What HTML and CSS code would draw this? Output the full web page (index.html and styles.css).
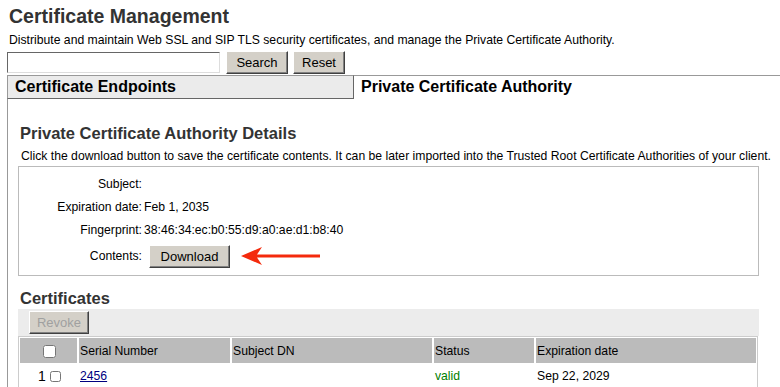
FILE: index.html
```html
<!DOCTYPE html>
<html lang="en">
<head>
  <meta charset="UTF-8" />
  <title>Certificate Management</title>
  <link rel="stylesheet" href="styles.css">
</head>
<body>
  <h1>Certificate Management</h1>
  <p class="intro">Distribute and maintain Web SSL and SIP TLS security certificates, and manage the Private Certificate Authority.</p>

  <div class="search-row">
    <input type="text" class="search-box" />
    <button class="btn btn-search">Search</button>
    <button class="btn btn-reset">Reset</button>
  </div>

  <div class="tabs">
    <div class="tab">Certificate Endpoints</div>
    <div class="tab active">Private Certificate Authority</div>
  </div>

  <div class="panel">
    <h2>Private Certificate Authority Details</h2>
    <p class="desc">Click the download button to save the certificate contents. It can be later imported into the Trusted Root Certificate Authorities of your client.</p>
    <div class="details">
      <table class="details-table">
        <tr><td class="lbl">Subject:</td><td></td></tr>
        <tr><td class="lbl">Expiration date:</td><td>Feb 1, 2035</td></tr>
        <tr><td class="lbl">Fingerprint:</td><td>38:46:34:ec:b0:55:d9:a0:ae:d1:b8:40</td></tr>
        <tr class="row-download">
          <td class="lbl">Contents:</td>
          <td>
            <div class="download-cell">
              <button class="btn download">Download</button>
              <svg class="arrow" width="80" height="20" viewBox="0 0 80 20">
                <path d="M0 10 L21 1 L16 8.5 L79 8.5 L79 11.5 L16 11.5 L21 19 Z" fill="#f42a0c"/>
              </svg>
            </div>
          </td>
        </tr>
      </table>
    </div>

    <h2 class="certs-title">Certificates</h2>
    <div class="toolbar"><button class="btn" disabled>Revoke</button></div>
    <table class="certs">
      <tr>
        <th class="c-chk"><input type="checkbox" /></th>
        <th class="c-serial">Serial Number</th>
        <th class="c-subject">Subject DN</th>
        <th class="c-status">Status</th>
        <th class="c-exp">Expiration date</th>
      </tr>
      <tr>
        <td class="row-num">1 <input type="checkbox" /></td>
        <td><a href="#">2456</a></td>
        <td></td>
        <td class="valid">valid</td>
        <td>Sep 22, 2029</td>
      </tr>
    </table>
  </div>
</body>
</html>
```

FILE: styles.css
```css
body { font-family: "Liberation Sans", Arial, sans-serif; font-size: 12.2px; color: #000; margin: 0; padding: 0 0 0 7px; overflow: hidden; }
h1 { font-size: 19.5px; color: #333; margin: 0; padding: 5px 0 0 2px; line-height: 23px; }
.intro { margin: 5px 0 0 2px; line-height: 14px; }
.search-row { display: flex; align-items: center; margin-top: 4px; height: 23px; }
.search-box { width: 213px; height: 21px; box-sizing: border-box; margin: 0 6px 0 0; padding: 0 2px; border: 1px solid; border-color: #666 #ddd #ddd #666; font-size: 12px; }
.btn { font-family: "Liberation Sans", Arial, sans-serif; font-size: 13px; background: #d4d0c8; color: #000; border: 1px solid; border-color: #fff #404040 #404040 #fff; box-shadow: inset -1px -1px 0 #808080; padding: 0 8px; height: 23px; }
.btn:disabled { color: #a0a0a0; }
.btn-search { width: 62px; margin-right: 5px; }
.btn-reset { width: 52px; }
.tabs { display: flex; margin-top: 1px; }
.tab { width: 338px; height: 22px; line-height: 22px; padding-left: 7px; font-size: 16px; font-weight: bold; background: #ebebeb; border: 1px solid #999; border-right-color: #666; border-bottom-color: #666; }
.tab.active { flex: 1; width: auto; background: #fff; border: none; border-top: 1px solid #999; padding-left: 7px; }
.panel { border-left: 1px solid #999; padding: 25px 0 0 10px; }
h2 { font-size: 16.5px; color: #333; margin: 0 0 0 2px; line-height: 19px; }
.desc { margin: 6px 0 0 3px; line-height: 14px; }
.details { width: 741px; height: 110px; box-sizing: border-box; border: 1px solid #bbb; margin-top: 3px; padding-top: 5px; }
.details-table { border-collapse: collapse; }
.details-table td { padding: 0; height: 23px; vertical-align: middle; }
.details-table .lbl { width: 123px; text-align: right; padding-right: 2px; }
.row-download td { height: 30px; }
.download-cell { display: flex; align-items: center; gap: 11px; padding-left: 5px; }
.download { width: 81px; padding: 0; }
.arrow { display: block; }
.certs-title { margin-top: 13px; }
.toolbar { width: 741px; background: #ececec; height: 27px; display: flex; align-items: center; padding-left: 11px; box-sizing: border-box; margin-top: 1px; }
.toolbar .btn { width: 60px; padding: 0; }
.certs { width: 740px; table-layout: fixed; border-collapse: separate; border-spacing: 0; border: 1px solid #ccc; border-bottom: none; }
.certs th { box-sizing: border-box; background: #bbb; font-weight: normal; text-align: left; height: 27px; padding: 0 1px; border: 1px solid #fff; }
.certs td { height: 23px; padding: 0 2px; }
.certs .c-chk { width: 59px; text-align: center; }
.c-chk input { margin: 0 0 0 1px; width: 13px; height: 13px; vertical-align: middle; }
.row-num { font-size: 14px; padding-left: 19px !important; white-space: nowrap; }
.row-num input { margin: 0; width: 11px; height: 11px; vertical-align: middle; }
.c-serial { width: 153px; }
.c-subject { width: 202px; }
.c-status { width: 102px; }
.certs a { color: #000080; }
.valid { color: #008000; }
```
